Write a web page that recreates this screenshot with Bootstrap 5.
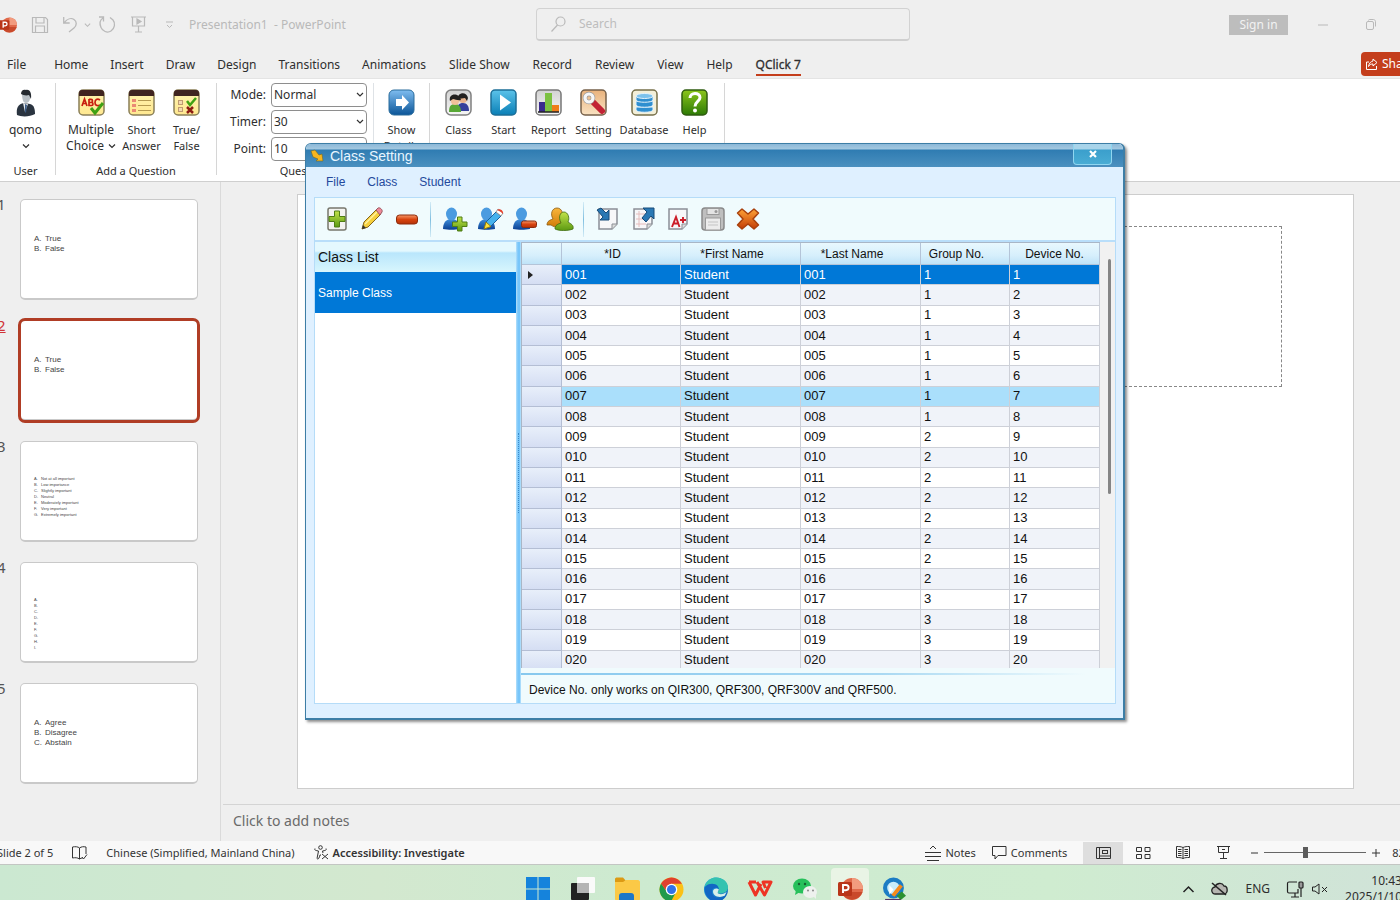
<!DOCTYPE html>
<html lang="en">
<head>
<meta charset="utf-8">
<meta name="viewport" content="width=device-width, initial-scale=1">
<title>Presentation1 - PowerPoint</title>
<link href="https://cdn.jsdelivr.net/npm/bootstrap@5.3.0/dist/css/bootstrap.min.css" rel="stylesheet">
<style>
  :root { --ui: "Noto Sans", "Open Sans", sans-serif; --dlg: "Liberation Sans", Arial, sans-serif; }
  body { font: 12px/16px var(--ui); color: #333; background: #efefef; }
  button, input, select { font-family: inherit; color: inherit; }
  button { background: none; border: 0; padding: 0; }
  svg { display: block; flex: none; overflow: visible; }
  a { color: inherit; text-decoration: none; }

  /* title bar */
  .titlebar { height: 49px; color: #b9b9b9; }
  .title-left { flex: 536 1 0; }
  .title-right { flex: 490 1 0; gap: 38px; }
  .quick { margin-left: -1px; gap: 15px; }
  .undo { gap: 7px; }
  .searchbox { width: 374px; height: 33px; border: 1px solid #d2d2d2; border-bottom: 2px solid #cfcfcf; border-radius: 4px; padding-left: 13px; gap: 12px; }
  .searchbox input { background: none; border: 0; outline: 0; padding: 0; }
  .searchbox input::placeholder { color: #bdbdbd; opacity: 1; }
  .signin { background: #bdbdbd; color: #f2f2f2; width: 59px; height: 20px; margin-right: -8px; }

  /* tabs */
  .tabs { height: 30px; gap: 22px; padding-left: 7px; border-bottom: 1px solid #e4e4e4; }
  .tabs a { color: #2e2e2e; height: 23px; padding-top: 4px; margin-bottom: 2px; border-bottom: 2px solid transparent; }
  .tabs a:first-child { margin-right: 6px; }
  .tabs a:nth-child(n+8) { margin-left: 1px; }
  .tabs a.active { border-color: #c43e1c; -webkit-text-stroke: 0.3px; }
  .sharebtn { background: #c43e1c; color: #fff; border-radius: 4px; height: 24px; width: 64px; padding-left: 5px; gap: 4px; margin: 0 -25px 2px auto; }

  /* ribbon */
  .ribbon { height: 103px; background: #fff; border-bottom: 1px solid #cfcfcf; padding: 4px 0 2px; font-size: 11px; color: #2e2e2e; }
  .grp { border-right: 1px solid #d6d6d6; margin-bottom: 4px; }
  .grp-user { width: 56px; padding-right: 4px; }
  .grp-ask { width: 161px; }
  .grp-class { padding: 0 7px 0 6px; }
  .grp-label { height: 16px; margin-bottom: -4px; }
  .tool { display: flex; flex-direction: column; align-items: center; padding-top: 6px; width: 45px; white-space: nowrap; }
  .tool svg { margin-bottom: 6px; }
  .tool svg.small-chev { margin: 4px 0 0; }
  .tool.wide { width: 56px; }
  .tool.menu { font-size: 12px; }
  .tool.menu span svg { margin: 0; }
  .opts { gap: 3px; padding-left: 5px; width: 156px; }
  .opts label { width: 44px; text-align: right; font-size: 12px; margin-right: 5px; }
  .opts select, .opts input { width: 96px; height: 24px; border: 1px solid #8e8e8e; border-radius: 4px; padding: 0 3px 1px 2px; font-size: 12px; background: #fff; }
  .opts select { appearance: none; background: #fff url("data:image/svg+xml,%3Csvg xmlns='http://www.w3.org/2000/svg' width='8' height='6'%3E%3Cpath d='M1 1l3 3 3-3' fill='none' stroke='%23333' stroke-width='1.200'/%3E%3C/svg%3E") right 2px center no-repeat; }

  /* workspace */
  .thumbs { width: 221px; border-right: 1px solid #dadada; padding-top: 17px; gap: 20px; }
  .thumb-row { display: flex; }
  .thumb-num { width: 20px; font-size: 15px; line-height: 10px; color: #555; margin: 0 3px 0 -3px; }
  .thumb { width: 178px; height: 101px; background: #fff; border: 1px solid #c9c9c9; border-bottom-width: 2px; border-radius: 5px; padding: 34px 13px 0; color: #444; font: 8px/10px var(--dlg); }
  .thumb ol { list-style: none; margin: 0; padding: 0; }
  .thumb li { display: flex; }
  .thumb li i { font-style: normal; width: 11px; }
  .thumb.tiny { font-size: 4px; line-height: 6px; }
  .thumb.tiny li i { width: 7px; }
  .picked .thumb { outline: 3px solid #b03d25; outline-offset: -1px; }
  .picked .thumb-num { color: #d13438; text-decoration: underline; }
  .stage { padding: 12px 46px 15px 76px; }
  .slide { background: #fff; border: 1px solid #cdcdcd; padding: 31px 71px; }
  .holder { border: 1px dashed #888; height: 161px; }
  .notes { height: 37px; border-top: 1px solid #d4d4d4; font-size: 14px; color: #6a6a6a; padding: 8px 0 0 10px; margin-left: 2px; }

  /* status bar */
  .status { height: 24px; background: #f8f8f8; border-bottom: 1px solid #c3c6c3; font-size: 11px; color: #333; }
  .status-left { gap: 19px; margin-left: -3px; }
  .status-right { margin-right: -14px; }
  .viewbtn { width: 40px; height: 22px; display: flex; align-items: center; justify-content: center; }
  .viewbtn.on { background: #dedede; }
  .zoomer { appearance: none; width: 102px; height: 12px; margin: 0 6px; background: linear-gradient(#666,#666) center/100% 1px no-repeat; }
  .zoomer::-webkit-slider-thumb { appearance: none; width: 5px; height: 11px; background: #5c5c5c; }

  /* taskbar */
  .taskbar { height: 35px; padding-left: 30px; background: linear-gradient(90deg,#cbe8d1,#d3e8cf 27%,#cdead0 45%,#cfecd0 75%,#d0e3d8); }
  .taskbar > div { height: 48px; }
  .apps { width: 400px; }
  .app { width: 44px; height: 42px; display: flex; align-items: center; justify-content: center; border-radius: 4px; }
  .app.on { background: #e9f4e5; width: 38px; margin: 0 3px; }
  .side { flex: 1 1 0; }
  .tray { gap: 17px; margin-right: -2px; color: #2e2e2e; }

  /* class dialog */
  .dlg { position: absolute; left: 305px; top: 143px; width: 820px; height: 577px; font: 12px/16px var(--dlg); color: #111; background: #dff0ff; border: 1px solid #3d7ea6; border-right-width: 2px; border-bottom-width: 2px; border-radius: 6px 6px 0 0; box-shadow: 2px 2px 3px rgba(0,0,0,.45); }
  .dlg-title { height: 24px; color: #e8f6ff; font-size: 14px; padding-left: 4px; gap: 6px; background: linear-gradient(#8cb8d8,#a3c8e0 5px,#2f7cb2 6px,#4b90bf); border-radius: 5px 5px 0 0; }
  .dlg-close { width: 39px; height: 21px; border: 1px solid #8fd6f0; border-top: 0; border-radius: 0 0 4px 4px; background: linear-gradient(#a8d4ea 5px,#3b9fcc 6px,#49acd4); margin-right: 11px; }
  .dlg-menu { height: 31px; padding-left: 20px; gap: 22px; color: #24499c; }
  .dlg-body { margin: 0 7px 14px 8px; border: 1px solid #b5dcf8; background: #f0fbfd; }
  .bar { height: 44px; padding-left: 4px; border-bottom: 2px solid #b9defa; }
  .tb { width: 35px; height: 35px; display: flex; align-items: center; justify-content: center; }
  .sep { width: 1px; height: 35px; background: linear-gradient(#d4ecf6,#80bfe0,#d4ecf6); margin: 0 6px; }
  .classes { flex: 0 0 201px; background: #fff; }
  .classes h2 { font-size: 14px; line-height: 30px; height: 30px; margin: 0; padding-left: 3px; background: linear-gradient(#e4f8fe 9px,#b9e6fc 11px,#d8f6fd); }
  .classes button { height: 41px; padding-left: 3px; background: #0078d7; color: #fff; font-size: 12px; }
  .splitter { flex: 0 0 5px; background: linear-gradient(90deg,#b5e0fb,#78c6fa 2px,#78c6fa 4px,#d9f0fc); display: flex; align-items: center; }
  .splitter span { height: 80px; border-left: 1px dotted #3c8ac8; margin-left: 2px; }
  .gridbox { height: 426px; overflow: hidden; }
  .stu { height: 429px; table-layout: fixed; border-collapse: separate; border-spacing: 0; border-left: 1px solid #a9b6c6; border-top: 1px solid #a9b6c6; }
  .stu th { height: 22px; font-weight: 400; text-align: center; padding: 0 17px 0 0; border-right: 1px solid #b4c4d8; background: linear-gradient(#e9f8fe,#d6effc 60%,#bfe3f8); border-bottom: 1px solid #b4c4d8; white-space: nowrap; }
  .stu th:last-child { padding: 0; }
  .stu td { font-size: 13px; padding: 0 3px; border-right: 1px solid #cdd0d8; border-bottom: 1px solid #cdd0d8; background: #fff; }
  .stu tr:nth-child(even) td { background: #f0f3f9; }
  .stu tbody tr td:first-child { background: linear-gradient(#e8effa,#d5def3); border-color: #b4bed4; padding-left: 6px; }
  .stu tr.cur td { background: #0078d7; color: #fff; }
  .stu tr.hot td { background: #aadffb; }
  .vscroll { width: 15px; background: #f1f1f1; padding: 17px 0 0 8px; }
  .vscroll span { display: block; width: 3px; height: 235px; background: #858585; border-radius: 2px; }
  .hint { margin-top: 5px; height: 30px; padding: 7px 8px 0; border-top: 2px solid; border-image: linear-gradient(90deg,#86c8ee,#a8d8f2 60%,transparent 95%) 1; }
</style>
</head>
<body class="vh-100 d-flex flex-column overflow-hidden position-relative">

<svg width="0" height="0" class="position-absolute" aria-hidden="true">
  <defs>
    <linearGradient id="gBlue" x2="0" y2="1"><stop stop-color="#7fbdf0"/><stop offset="1" stop-color="#0b5598"/></linearGradient>
    <linearGradient id="gCyan" x2="0" y2="1"><stop stop-color="#5cc3ea"/><stop offset="1" stop-color="#0a7fb6"/></linearGradient>
    <linearGradient id="gGrey" x2="0" y2="1"><stop stop-color="#d2d2d2"/><stop offset="1" stop-color="#f6f6f6"/></linearGradient>
    <linearGradient id="gTan" x2="0" y2="1"><stop stop-color="#e9b27c"/><stop offset="1" stop-color="#f9e2c2"/></linearGradient>
    <linearGradient id="gGreen" x2="0" y2="1"><stop stop-color="#8cc61c"/><stop offset="1" stop-color="#2d7a05"/></linearGradient>
    <linearGradient id="gLime" x2="0" y2="1"><stop stop-color="#c2e34a"/><stop offset="1" stop-color="#5c9a12"/></linearGradient>
    <linearGradient id="gOrange" x2="0" y2="1"><stop stop-color="#ffa437"/><stop offset="1" stop-color="#c23c05"/></linearGradient>
    <linearGradient id="gAmber" x2="0" y2="1"><stop stop-color="#f9b63c"/><stop offset="1" stop-color="#d07a08"/></linearGradient>
    <linearGradient id="gRed" x2="0" y2="1"><stop stop-color="#f79a6b"/><stop offset=".5" stop-color="#d8430f"/><stop offset="1" stop-color="#b53208"/></linearGradient>
    <linearGradient id="gNote" x2="0" y2="1"><stop stop-color="#fff3b0"/><stop offset="1" stop-color="#ffe890"/></linearGradient>
    <linearGradient id="gEdge" x2="1" y2="1"><stop stop-color="#2fb6e8"/><stop offset="1" stop-color="#0c58b8"/></linearGradient>
    <linearGradient id="gBody" x2="0" y2="1"><stop stop-color="#3f8fdc"/><stop offset="1" stop-color="#0a3f92"/></linearGradient>
    <symbol id="note" viewBox="0 0 27 27"><rect x="1" y="1" width="25" height="25" rx="4" fill="url(#gNote)" stroke="#8a7f58" stroke-width="1.500"/><path d="M1 7V4a3 3 0 0 1 3-3h19a3 3 0 0 1 3 3v3z" fill="#402420"/></symbol>
    <symbol id="person" viewBox="0 0 24 24"><path d="M1 22c0-5 2-9 7-10h3c5 1 7 5 7 10-5 1-12 1-17 0z" fill="url(#gBody)"/><ellipse cx="9.500" cy="7" rx="5.500" ry="6.500" fill="#4b9be0"/></symbol>
    <symbol id="sheet" viewBox="0 0 24 24"><path d="M3 2h18v15l-5 5H3z" fill="#f7f7f9" stroke="#8b8f96" stroke-width="1.500"/><path d="M21 17h-5v5" fill="#dcdcdc" stroke="#8b8f96"/></symbol>
    <symbol id="chev" viewBox="0 0 8 8"><path d="M1 2.500l3 3 3-3" fill="none" stroke="currentColor" stroke-width="1.200"/></symbol>
    <symbol id="ppt" viewBox="0 0 26 26"><circle cx="15" cy="13" r="11" fill="#e0694a"/><path d="M15 2a11 11 0 0 1 11 11H15z" fill="#f29b7e"/><path d="M4.500 16h21a11 11 0 0 1-21 0z" fill="#c9492b"/><rect x="1" y="6" width="14" height="14" rx="1.500" fill="#b93519"/><path d="M6 17V9h3a2.500 2.500 0 0 1 0 5.200H6" fill="none" stroke="#fff" stroke-width="1.900"/></symbol>
  </defs>
</svg>

<header class="titlebar d-flex align-items-center flex-shrink-0">
  <div class="title-left d-flex align-items-center">
    <div class="quick d-flex align-items-center">
      <svg width="18" height="18"><use href="#ppt"/></svg>
      <button aria-label="Save"><svg width="16" height="16" fill="none" stroke="currentColor" stroke-width="1.200"><path d="M.5.5h13l2 2v13H.5zM4 .5V6h8V.500M3.500 15.500V9h9v6.500"/></svg></button>
      <div class="d-flex align-items-center gap-2">
        <button class="undo d-flex align-items-center" aria-label="Undo"><svg width="14" height="17" fill="none" stroke="currentColor" stroke-width="1.300"><path d="M.700 1v6h6M1 7C4 3 8 1.500 11 3.500s3 6 0 8.500l-5 4"/></svg><svg width="7" height="8"><use href="#chev"/></svg></button>
        <button aria-label="Redo"><svg width="17" height="17" fill="none" stroke="currentColor" stroke-width="1.300"><path d="M0 1h4.500v4.500M4 2C1 4 .500 8 2 11.500s6 6 10 3.500 4.500-8 2-11L11 1.500"/></svg></button>
      </div>
      <div class="d-flex align-items-center">
        <button class="me-3" aria-label="Start slide show"><svg width="15" height="17" fill="none" stroke="currentColor" stroke-width="1.200"><path d="M0 1h15M1.500 1v9h12V1M7.500 10v6M4 16h7"/><path d="M6 3l4 2.500L6 8z" fill="currentColor"/></svg></button>
        <button class="ms-1" aria-label="Customize"><svg width="8" height="8" fill="none" stroke="currentColor"><path d="M0 1h7M1 4l2.500 2.500L6 4"/></svg></button>
      </div>
      <span>Presentation1 &nbsp;- PowerPoint</span>
    </div>
  </div>
  <div class="searchbox d-flex align-items-center">
    <svg width="17" height="17" fill="none" stroke="currentColor" stroke-width="1.200"><circle cx="10.500" cy="5.500" r="4.500"/><path d="M7.500 9L1.500 15.500"/></svg>
    <input type="text" placeholder="Search" aria-label="Search" class="flex-grow-1">
  </div>
  <div class="title-right d-flex align-items-center justify-content-end">
    <button class="signin">Sign in</button>
    <button aria-label="Minimize"><svg width="10" height="10"><path d="M0 5h10" stroke="currentColor"/></svg></button>
    <button class="me-4" aria-label="Restore"><svg width="10" height="11" fill="none" stroke="currentColor"><rect x=".5" y="2.500" width="7" height="8" rx="1.500"/><path d="M2.500 1.500c0-.6.500-1 1-1h4c1 0 2 1 2 2v5"/></svg></button>
  </div>
</header>

<nav class="tabs d-flex align-items-end flex-shrink-0" aria-label="Ribbon tabs">
  <a href="#">File</a><a href="#">Home</a><a href="#">Insert</a><a href="#">Draw</a><a href="#">Design</a><a href="#">Transitions</a><a href="#">Animations</a><a href="#">Slide Show</a><a href="#">Record</a><a href="#">Review</a><a href="#">View</a><a href="#">Help</a><a href="#" class="active">QClick 7</a>
  <button class="sharebtn d-flex align-items-center"><svg width="12" height="12" fill="none" stroke="#fff"><path d="M3 4H.500v7.500h10V8M7 1l4 3.500L7 8V6C5 6 3.500 6.500 2.500 8.500 3 5 5 3.500 7 3z"/></svg>Share</button>
</nav>

<section class="ribbon d-flex flex-shrink-0">
  <div class="grp grp-user d-flex flex-column align-items-center">
    <button class="tool menu flex-grow-1">
      <svg width="26" height="27"><path d="M4 26c-1-7 1-11 7-12l6 1c4 1 5 5 5 10-5 3-14 3-18 1z" fill="#2a3440"/><path d="M10 14l2 9 3-8z" fill="#e8ecef"/><path d="M12 15l2 1-1 8-1-1z" fill="#3c5c86"/><path d="M9 4c0 6 1 10 4 10s5-4 4-9z" fill="#b9c0c6"/><path d="M8 5c0-4 3-5 5-4 3-1 6 2 5 9l-2-4c-3 1-6 0-8-1z" fill="#252a30"/></svg>
      qomo<svg class="small-chev" width="8" height="8"><use href="#chev"/></svg></button>
    <div class="grp-label">User</div>
  </div>
  <div class="grp grp-ask d-flex flex-column align-items-center">
    <div class="d-flex flex-grow-1">
      <button class="tool menu wide"><svg width="27" height="27"><use href="#note"/><g stroke="#c81e10" stroke-width="1.700" fill="none"><path d="M4 17l2.500-7L9 17M5 14.500h3M11 10v6.500h2.500c2 0 2-3 0-3H11h2c2 0 2-3.200 0-3.200h-2M22 11c-3-2-5 0-5 2.500s2 4 5 2.500"/></g><path d="M13 19l4 5 8-10" fill="none" stroke="#3fa012" stroke-width="3"/></svg>Multiple<span class="d-flex align-items-center gap-1">Choice<svg width="8" height="8"><use href="#chev"/></svg></span></button>
      <button class="tool"><svg width="27" height="27"><use href="#note"/><path d="M10 11.500h13M10 16.500h13M10 21.500h13" stroke="#b59a50" stroke-width="1.200"/><path d="M4 11.500h4M4 16.500h4M4 21.500h4" stroke="#ea8a74" stroke-width="3"/></svg>Short<span>Answer</span></button>
      <button class="tool"><svg width="27" height="27"><use href="#note"/><rect x="5.500" y="11.500" width="4" height="4" fill="#f2d9b0" stroke="#c09a70"/><rect x="5.500" y="18.500" width="4" height="4" fill="#f2d9b0" stroke="#c09a70"/><path d="M14 12l3 4 6-7" fill="none" stroke="#3fa012" stroke-width="2.500"/><path d="M14 18l6 6M20 18l-6 6" stroke="#8c1c12" stroke-width="2.500"/></svg>True/<span>False</span></button>
    </div>
    <div class="grp-label">Add a Question</div>
  </div>
  <div class="grp d-flex flex-column align-items-center">
    <div class="d-flex flex-grow-1">
      <div class="opts d-flex flex-column">
        <div class="d-flex align-items-center"><label for="mode">Mode:</label><select id="mode"><option>Normal</option></select></div>
        <div class="d-flex align-items-center"><label for="timer">Timer:</label><select id="timer"><option>30</option></select></div>
        <div class="d-flex align-items-center"><label for="point">Point:</label><input id="point" type="text" value="10"></div>
      </div>
      <button class="tool wide border-start"><svg width="27" height="27"><rect x="1" y="1" width="25" height="25" rx="5" fill="url(#gBlue)" stroke="#2a6c9c"/><path d="M8 10h6V6l7 7.500L14 21v-4H8z" fill="#fff"/></svg>Show<span>Details</span></button>
    </div>
    <div class="grp-label">Question Setting</div>
  </div>
  <div class="grp grp-class d-flex">
    <button class="tool"><svg width="27" height="27"><rect x="1" y="1" width="25" height="25" rx="5" fill="url(#gGrey)" stroke="#808080" stroke-width="1.500"/><path d="M12 22c0-6 2-8 6-8s6 3 6 8z" fill="#34409c"/><circle cx="18" cy="10" r="4" fill="#e7b28c"/><path d="M13 10c-1-7 9-8 10-1l-1 3-2-3z" fill="#22201f"/><path d="M4 23c0-6 2-8 6-8s6 3 6 8z" fill="#58a836"/><circle cx="10" cy="12" r="4" fill="#efc19a"/><path d="M5 12c-2-8 9-9 11-1-3 1-6-1-8-1z" fill="#22201f"/></svg>Class</button>
    <button class="tool"><svg width="27" height="27"><rect x="1" y="1" width="25" height="25" rx="4" fill="url(#gCyan)" stroke="#1d6f98" stroke-width="1.500"/><path d="M10 5.500l11 8-11 8z" fill="#fff"/></svg>Start</button>
    <button class="tool"><svg width="27" height="27"><rect x="1" y="1" width="25" height="25" rx="4" fill="url(#gGrey)" stroke="#777" stroke-width="1.500"/><rect x="4" y="13" width="6" height="10" fill="#3a2a8e"/><rect x="10" y="4" width="7" height="19" fill="#7cc142"/><rect x="17" y="16" width="7" height="7" fill="#ef7d1a"/><path d="M3 23h21" stroke="#222" stroke-width="1.500"/></svg>Report</button>
    <button class="tool"><svg width="27" height="27"><rect x="1" y="1" width="25" height="25" rx="4" fill="url(#gTan)" stroke="#75604a" stroke-width="1.500"/><path d="M13 13l9 9" stroke="#c22234" stroke-width="6" stroke-linecap="round"/><circle cx="9" cy="9" r="4" fill="none" stroke="#9c9c9c" stroke-width="4.500"/><circle cx="9" cy="9" r="4" fill="none" stroke="#f6f6f6" stroke-width="3.200"/></svg>Setting</button>
    <button class="tool wide"><svg width="27" height="27"><rect x="1" y="1" width="25" height="25" rx="4" fill="#f3efd8" stroke="#77704a" stroke-width="1.500"/><g fill="#2f8fd0" stroke="#e6f3fa"><path d="M5 18v3c0 3 17 3 17 0v-3z"/><path d="M5 12v4c0 3 17 3 17 0v-4z"/><path d="M5 7v4c0 3 17 3 17 0V7z"/><ellipse cx="13.500" cy="7" rx="8.500" ry="2.500" fill="#7cc2ec"/></g></svg>Database</button>
    <button class="tool"><svg width="27" height="27"><rect x="1" y="1" width="25" height="25" rx="4" fill="url(#gGreen)" stroke="#2f5c10" stroke-width="1.500"/><path d="M9 9c0-6 10-6 10-.5 0 4-5 4-5 9" fill="none" stroke="#fff" stroke-width="3"/><circle cx="14" cy="21.500" r="2" fill="#fff"/></svg>Help</button>
  </div>
</section>

<main class="d-flex flex-grow-1" style="min-height:0">
  <aside class="thumbs d-flex flex-column flex-shrink-0">
    <div class="thumb-row"><span class="thumb-num">1</span><div class="thumb"><ol><li><i>A.</i>True</li><li><i>B.</i>False</li></ol></div></div>
    <div class="thumb-row picked"><span class="thumb-num">2</span><div class="thumb"><ol><li><i>A.</i>True</li><li><i>B.</i>False</li></ol></div></div>
    <div class="thumb-row"><span class="thumb-num">3</span><div class="thumb tiny"><ol><li><i>A.</i>Not at all important</li><li><i>B.</i>Low importance</li><li><i>C.</i>Slightly important</li><li><i>D.</i>Neutral</li><li><i>E.</i>Moderately important</li><li><i>F.</i>Very important</li><li><i>G.</i>Extremely important</li></ol></div></div>
    <div class="thumb-row"><span class="thumb-num">4</span><div class="thumb tiny"><ol><li>A.</li><li>B.</li><li>C.</li><li>D.</li><li>E.</li><li>F.</li><li>G.</li><li>H.</li><li>I.</li></ol></div></div>
    <div class="thumb-row"><span class="thumb-num">5</span><div class="thumb"><ol><li><i>A.</i>Agree</li><li><i>B.</i>Disagree</li><li><i>C.</i>Abstain</li></ol></div></div>
  </aside>
  <div class="d-flex flex-column flex-grow-1">
    <div class="stage flex-grow-1 d-flex"><div class="slide flex-grow-1"><div class="holder"></div></div></div>
    <div class="notes">Click to add notes</div>
  </div>
</main>

<footer class="status d-flex align-items-center flex-shrink-0">
  <div class="status-left d-flex align-items-center">
    <span>Slide 2 of 5</span>
    <svg width="15" height="14" fill="none" stroke="#333"><path d="M7.500 2C6 .500 3 .500.500 1v11c2.500-.5 5-.5 7 1 1-.8 2-1 3-1M7.500 2v11M7.500 2c2-1.500 4-1.500 6.500-1v7M10 11l1.500 2L15 8.500"/></svg>
    <span>Chinese (Simplified, Mainland China)</span>
    <button class="d-flex align-items-center gap-1"><svg width="15" height="15" fill="none" stroke="#333"><circle cx="6.500" cy="2.500" r="1.800"/><path d="M1 3.500c-1 1 0 2 3.500 2.500L3 13.500c1 1 2 .500 3-3.500h1M12 3.500c1 1 0 2-3.500 2.500l.5 2M8 9l6 5M14 9l-6 5"/></svg><strong class="fw-semibold">Accessibility: Investigate</strong></button>
  </div>
  <div class="status-right ms-auto d-flex align-items-center">
    <button class="d-flex align-items-center gap-1 me-3"><svg width="16" height="16" fill="none" stroke="#333"><path d="M0 7.500h16M0 11.500h16M2 15.500h12M5 4l3-3 3 3"/></svg>Notes</button>
    <button class="d-flex align-items-center gap-1 me-3"><svg width="15" height="14" fill="none" stroke="#333"><path d="M.500.500h13.500v9H6l-3 3.500V9.500H.500z"/></svg>Comments</button>
    <button class="viewbtn on" aria-label="Normal"><svg width="15" height="12" fill="none" stroke="#333"><path d="M.500.500h14v11H.500zM3.500.500v11M3.500 9h11"/><rect x="6.500" y="3.500" width="5" height="3"/></svg></button>
    <button class="viewbtn" aria-label="Slide sorter"><svg width="15" height="12" fill="none" stroke="#333"><path d="M.500.500h5v4h-5zM9 .500h5v4H9zM.500 7.500h5v4h-5zM9 7.500h5v4H9z"/></svg></button>
    <button class="viewbtn" aria-label="Reading view"><svg width="14" height="13" fill="none" stroke="#333"><path d="M7 1.500C5 .500 3 .500.500.500v11c2.500 0 4.500 0 6.500 1 2-1 4-1 6.500-1V.500C11 .500 9 .500 7 1.500zM7 1.500v11M2 3.500h3.500M2 5.500h3.500M2 7.500h3.500M2 9.500h3.500M8.500 3.500H12M8.500 5.500H12M8.500 7.500H12M8.500 9.500H12"/></svg></button>
    <button class="viewbtn" aria-label="Slide show"><svg width="13" height="13" fill="none" stroke="#333"><path d="M0 .500h13M1.500.500v6h10v-6M6.500 6.500v6M3 12.500h7M5 3.500h3"/></svg></button>
    <button class="ms-2" aria-label="Zoom out"><svg width="7" height="8"><path d="M0 4h7" stroke="#333"/></svg></button>
    <input type="range" class="zoomer" value="40" aria-label="Zoom">
    <button class="me-2" aria-label="Zoom in"><svg width="8" height="8"><path d="M0 4h8M4 0v8" stroke="#333"/></svg></button>
    <span class="ms-1">82%</span>
  </div>
</footer>

<div class="taskbar d-flex flex-shrink-0 overflow-hidden">
  <div class="side"></div>
  <div class="apps d-flex align-items-center justify-content-between">
    <button class="app" aria-label="Start"><svg width="24" height="24" fill="#1583dc"><path d="M0 0h11.500v11.500H0zM12.500 0H24v11.500H12.500zM0 12.500h11.500V24H0zM12.500 12.500H24V24H12.500z"/></svg></button>
    <button class="app" aria-label="Task view"><svg width="24" height="24"><rect y="6" width="18" height="17" rx="1" fill="#222"/><rect x="6" width="18" height="16" rx="1" fill="#fafafa"/><rect x="6" y="6" width="12" height="10" fill="#b4b4b4"/></svg></button>
    <button class="app" aria-label="File Explorer"><svg width="26" height="24"><path d="M1 2c0-1 1-1.500 2-1.500h6L12 4v3H1z" fill="#dc9a14"/><path d="M1 5h8l3-2h12c1 0 2 1 2 2v17c0 1-1 2-2 2H3c-1 0-2-1-2-2z" fill="#fbc946"/><path d="M5 24v-5c0-2 1-3 3-3h9c2 0 3 1 3 3v5z" fill="#1f77c6"/></svg></button>
    <button class="app" aria-label="Chrome"><svg width="25" height="25" viewBox="0 0 26 26"><circle cx="13" cy="13" r="12.500" fill="#fbc116"/><path d="M2.200 6.700A12.500 12.500 0 0 0 12.500 25.500L18 15l-9 1z" fill="#219a4b"/><path d="M2.200 6.700A12.500 12.500 0 0 1 23.800 7H13l-5 8z" fill="#e0402f"/><circle cx="13" cy="13" r="6" fill="#fff"/><circle cx="13" cy="13" r="4.700" fill="#3272e8"/></svg></button>
    <button class="app" aria-label="Edge"><svg width="26" height="25" viewBox="0 0 26 26"><circle cx="13" cy="13" r="12.500" fill="url(#gEdge)"/><path d="M1 11C3 3 9 .500 13 .500c7 0 12.500 4.500 12.500 10S20 18 16 17c-2-.5-1-2 0-3 0-4-3-6-7-6-3.500 0-6 1-8 3z" fill="#35c3b0"/><path d="M1 11c2-3 5-4 8-4 5 0 7 3 7 6-2-3-6-2-7 1-1 4 3 9 9 8 3-.5 4-1 6-3-3 5-7 7-12 6.500S.500 19 1 11z" fill="#1267c4"/><path d="M10 14c1-2 4-3 6-1-1 2-2 4 0 4.500 3 1 6-.5 8-2l-2 4c-6 3-13 0-12-5.500z" fill="#d7f0ea"/></svg></button>
    <button class="app" aria-label="WPS"><svg width="25" height="18" fill="none" stroke="#ee3424" stroke-width="3" stroke-linejoin="round"><path d="M1 2h7M1 2l6.500 13L13 4M9 2l7.500 13L23 2h-8l2.500 6"/></svg></button>
    <button class="app" aria-label="WeChat"><svg width="25" height="22"><ellipse cx="9" cy="8" rx="9" ry="7.500" fill="#27c05b"/><path d="M3 12l-1 5 5-3z" fill="#27c05b"/><circle cx="6" cy="6" r="1.200" fill="#185f32"/><circle cx="12" cy="6" r="1.200" fill="#185f32"/><ellipse cx="17" cy="14" rx="7" ry="6" fill="#eef1ee"/><path d="M20 18l3 3v-5z" fill="#eef1ee"/><circle cx="15" cy="12.500" r="1" fill="#888"/><circle cx="20" cy="12.500" r="1" fill="#888"/></svg></button>
    <button class="app on" aria-label="PowerPoint"><svg width="26" height="26"><use href="#ppt"/></svg></button>
    <button class="app" aria-label="QClick"><svg width="23" height="24" viewBox="0 0 22 23"><circle cx="10" cy="10.500" r="8" fill="#c9ecfa" stroke="#1c7cc4" stroke-width="4"/><path d="M6 8l4 4-4 5z" fill="#fff"/><path d="M8 17l8-10 3 2-8 10z" fill="#f58a1c"/><path d="M13 18l5-4 4 4-5 4z" fill="#2b9130"/><path d="M2 22h15" stroke="#536" stroke-width="2"/></svg></button>
  </div>
  <div class="side tray d-flex align-items-center justify-content-end">
    <button aria-label="Hidden icons"><svg width="11" height="8" fill="none" stroke="#222" stroke-width="1.500"><path d="M.500 7l5-5 5 5"/></svg></button>
    <svg width="17" height="14"><path d="M4.500 12a3.500 3.500 0 0 1-.5-7c1-4 7-5 9-1 4 0 4.500 8 0 8z" fill="#b5b5b0" stroke="#222" stroke-width="1.300"/><path d="M1 1l14 12" stroke="#222" stroke-width="1.600"/></svg>
    <span>ENG</span>
    <div class="d-flex align-items-center gap-2">
      <svg width="17" height="17" fill="none" stroke="#222" stroke-width="1.200"><path d="M10 1H2C1 1 .500 1.500.500 2.500v8c0 1 .500 1.500 1.500 1.500h9V8M4 16h8M8 12v4"/><rect x="12" y="1" width="4" height="6" rx="1" fill="#999"/><path d="M14 7v9"/></svg>
      <svg width="16" height="12" fill="none" stroke="#222"><path d="M.500 4H3l4-3v10L3 8H.500zM10 4l5 5M15 4l-5 5"/></svg>
    </div>
    <div class="text-end">10:43<br>2025/1/10</div>
  </div>
</div>

<section class="dlg d-flex flex-column" role="dialog" aria-label="Class Setting">
  <div class="dlg-title d-flex align-items-center">
    <svg width="14" height="13"><path d="M1 2l4-1 4 5 3-1 1 7-7 0 2-2-5-2z" fill="#f6b51e" stroke="#6f6a28" stroke-width=".6"/></svg>
    <span>Class Setting</span>
    <button class="dlg-close ms-auto d-flex align-items-center justify-content-center align-self-start" aria-label="Close"><svg width="8" height="8"><path d="M1 1l6 6M7 1L1 7" stroke="#fff" stroke-width="2.200"/></svg></button>
  </div>
  <nav class="dlg-menu d-flex align-items-center"><a href="#">File</a><a href="#">Class</a><a href="#">Student</a></nav>
  <div class="dlg-body flex-grow-1 d-flex flex-column">
    <div class="bar d-flex align-items-center">
      <button class="tb" aria-label="New class"><svg width="24" height="24"><rect x="3" y="1" width="18" height="22" rx="2" fill="#f3f3f0" stroke="#77776c" stroke-width="1.500"/><path d="M9.500 4h5v5.500H20v5h-5.500V20h-5v-5.500H4v-5h5.500z" fill="url(#gLime)" stroke="#4f7d14"/></svg></button>
      <button class="tb" aria-label="Edit class"><svg width="24" height="24"><path d="M2 22l2-7L16 3l5 4L8 20z" fill="#f5cf3c" stroke="#85641a"/><path d="M5 17L17 5" stroke="#fff2a0" stroke-width="1.500"/><path d="M16 3l2-2c2-1 5 2 4 4l-2 3z" fill="#ef8a9a" stroke="#9a5a60"/><path d="M2 22l1-4 3 3z" fill="#333"/></svg></button>
      <button class="tb" aria-label="Delete class"><svg width="24" height="24"><rect x="1.500" y="8" width="21" height="9" rx="3" fill="url(#gRed)" stroke="#8c2b0c"/></svg></button>
      <span class="sep"></span>
      <button class="tb" aria-label="Add student"><svg width="26" height="24"><use href="#person" width="24" height="24"/><path d="M15.500 10h4.500v5h5v4.500h-5V24h-4.500v-4.500h-5V15h5z" fill="url(#gLime)" stroke="#4f7d14"/></svg></button>
      <button class="tb" aria-label="Edit student"><svg width="26" height="24"><use href="#person" width="24" height="24"/><path d="M7 22l2-7L19 5l5 4-11 11z" fill="#45b2ee" stroke="#1b5f9c"/><path d="M19 5l2-3 5 4-2 3z" fill="#fff" stroke="#999"/><path d="M20 3c3-2 7 1 6 4l-2-2z" fill="#e8412c"/><path d="M7 22l2-7 5 4.500z" fill="#ffe23c" stroke="#947a10"/></svg></button>
      <button class="tb" aria-label="Delete student"><svg width="26" height="24"><use href="#person" width="24" height="24"/><rect x="9.500" y="14" width="15" height="6.500" rx="2" fill="url(#gRed)" stroke="#8c2b0c"/></svg></button>
      <button class="tb" aria-label="Groups"><svg width="28" height="24" stroke-width=".8"><path d="M1 18c0-4 3-5 6-6-3-5-1-11 4-11s7 6 4 11c3 2 6 4 5 7-5 2-11 2-15-1z" fill="url(#gAmber)" stroke="#8c5a10"/><path d="M9 22c0-4 3-5 6-6-3-6-1-11 3-11s6 6 4 10c3 2 6 3 5 7-5 2-14 2-18 0z" fill="url(#gLime)" stroke="#3f6c10"/></svg></button>
      <span class="sep"></span>
      <button class="tb" aria-label="Import"><svg width="24" height="24"><use href="#sheet"/><path d="M1 3l4-2 5 5 3-3v10H4l3-3z" fill="#2a78b4" stroke="#174b78"/></svg></button>
      <button class="tb" aria-label="Export"><svg width="24" height="24"><use href="#sheet"/><path d="M5 7h10M5 12h13M5 17h10M8 4v16" stroke="#e5bcbc"/><path d="M12 1h11v11l-3-3-5 6-4-4 5-6z" fill="#2a78b4" stroke="#174b78"/></svg></button>
      <button class="tb" aria-label="Grades"><svg width="24" height="24"><use href="#sheet"/><path d="M6 20l4-10 3.500 10M7.500 16.500h5M14 13h6M17 10v6" fill="none" stroke="#cc1c28" stroke-width="1.900"/></svg></button>
      <button class="tb" aria-label="Save"><svg width="24" height="24"><rect x="1" y="1" width="22" height="22" rx="3" fill="#bfbfbf" stroke="#8a8a8a" stroke-width="1.500"/><rect x="6" y="1.500" width="12" height="6" fill="#e4e4e4" stroke="#999"/><circle cx="15" cy="4.500" r="1.500" fill="#999"/><rect x="4.500" y="11" width="15" height="12" fill="#ececec" stroke="#999"/><path d="M7 15h10M7 18h10" stroke="#c4c4c4"/></svg></button>
      <button class="tb" aria-label="Close"><svg width="24" height="24"><path d="M1.500 6l4.500-4 6 5 6-5 4.500 4-5.500 6 5.500 6-4.500 4-6-5-6 5-4.500-4L7 12z" fill="url(#gOrange)" stroke="#a8400c" stroke-linejoin="round" stroke-width="1.500"/></svg></button>
    </div>
    <div class="d-flex flex-grow-1">
      <div class="classes"><h2>Class List</h2><button class="w-100 text-start d-block">Sample Class</button></div>
      <div class="splitter"><span></span></div>
      <div class="flex-grow-1 d-flex flex-column">
        <div class="gridbox d-flex">
          <table class="stu flex-grow-1">
            <colgroup><col style="width:40px"><col style="width:119px"><col style="width:120px"><col style="width:120px"><col style="width:89px"><col></colgroup>
            <thead><tr><th></th><th>*ID</th><th>*First Name</th><th>*Last Name</th><th>Group No.</th><th>Device No.</th></tr></thead>
            <tbody id="rows"></tbody>
          </table>
          <div class="vscroll flex-shrink-0"><span></span></div>
        </div>
        <div class="hint">Device No. only works on QIR300, QRF300, QRF300V and QRF500.</div>
      </div>
    </div>
  </div>
</section>

<script>
  // 20 students, eight to a group
  const rows = document.getElementById('rows');
  for (let n = 1; n <= 20; n++) {
    const id = String(n).padStart(3, '0');
    const tr = rows.insertRow();
    tr.className = n === 1 ? 'cur' : n === 7 ? 'hot' : '';
    ['', id, 'Student', id, Math.ceil(n / 8), n].forEach(v => tr.insertCell().textContent = v);
  }
  rows.rows[0].cells[0].innerHTML = '<svg width="6" height="8"><path d="M0 0l5 4-5 4z" fill="#222"/></svg>';
</script>
<script src="https://cdn.jsdelivr.net/npm/bootstrap@5.3.0/dist/js/bootstrap.bundle.min.js"></script>
</body>
</html>
